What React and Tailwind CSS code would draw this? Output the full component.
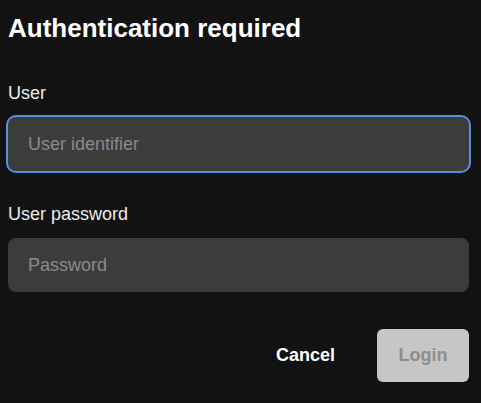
import { useState } from "react"

function Field({ label, placeholder, type, active, className }) {
    const [value, setValue] = useState("")
    return (
        <div className={className}>
            <label className="block text-[18px] leading-[20px] text-[#ececec]">{label}</label>
            <input
                type={type}
                value={value}
                autoFocus={active}
                onChange={(e) => setValue(e.target.value)}
                placeholder={placeholder}
                className={`mt-[14px] block h-[54px] w-full rounded-[8px] bg-[#3c3c3c] pl-5 text-[18px] text-white outline-none placeholder:text-[#8a8a8a] ${active ? "ring-2 ring-[#5a8de3]" : ""}`}
            />
        </div>
    )
}

export default function App() {
    return (
        <div className="min-h-[403px] w-full bg-[#121212] pl-[7px] pr-[12px] pt-[13px] font-['Liberation_Sans',Arial,sans-serif]">
            <h1 className="pl-px text-[26px] font-bold leading-[30px] text-white">Authentication required</h1>

            {/* user + password */}
            <Field className="mt-10 pl-px" label="User" placeholder="User identifier" type="text" active />
            <Field className="mt-[33px] pl-px" label="User password" placeholder="Password" type="password" />

            <div className="mt-[37px] flex items-center justify-end">
                <button className="mr-[42px] text-[18px] font-bold text-white">Cancel</button>
                <button disabled className="h-[53px] w-[92px] rounded-[6px] bg-[#c6c6c6] text-[18px] font-bold text-[#8e8e8e]">Login</button>
            </div>
        </div>
    )
}
